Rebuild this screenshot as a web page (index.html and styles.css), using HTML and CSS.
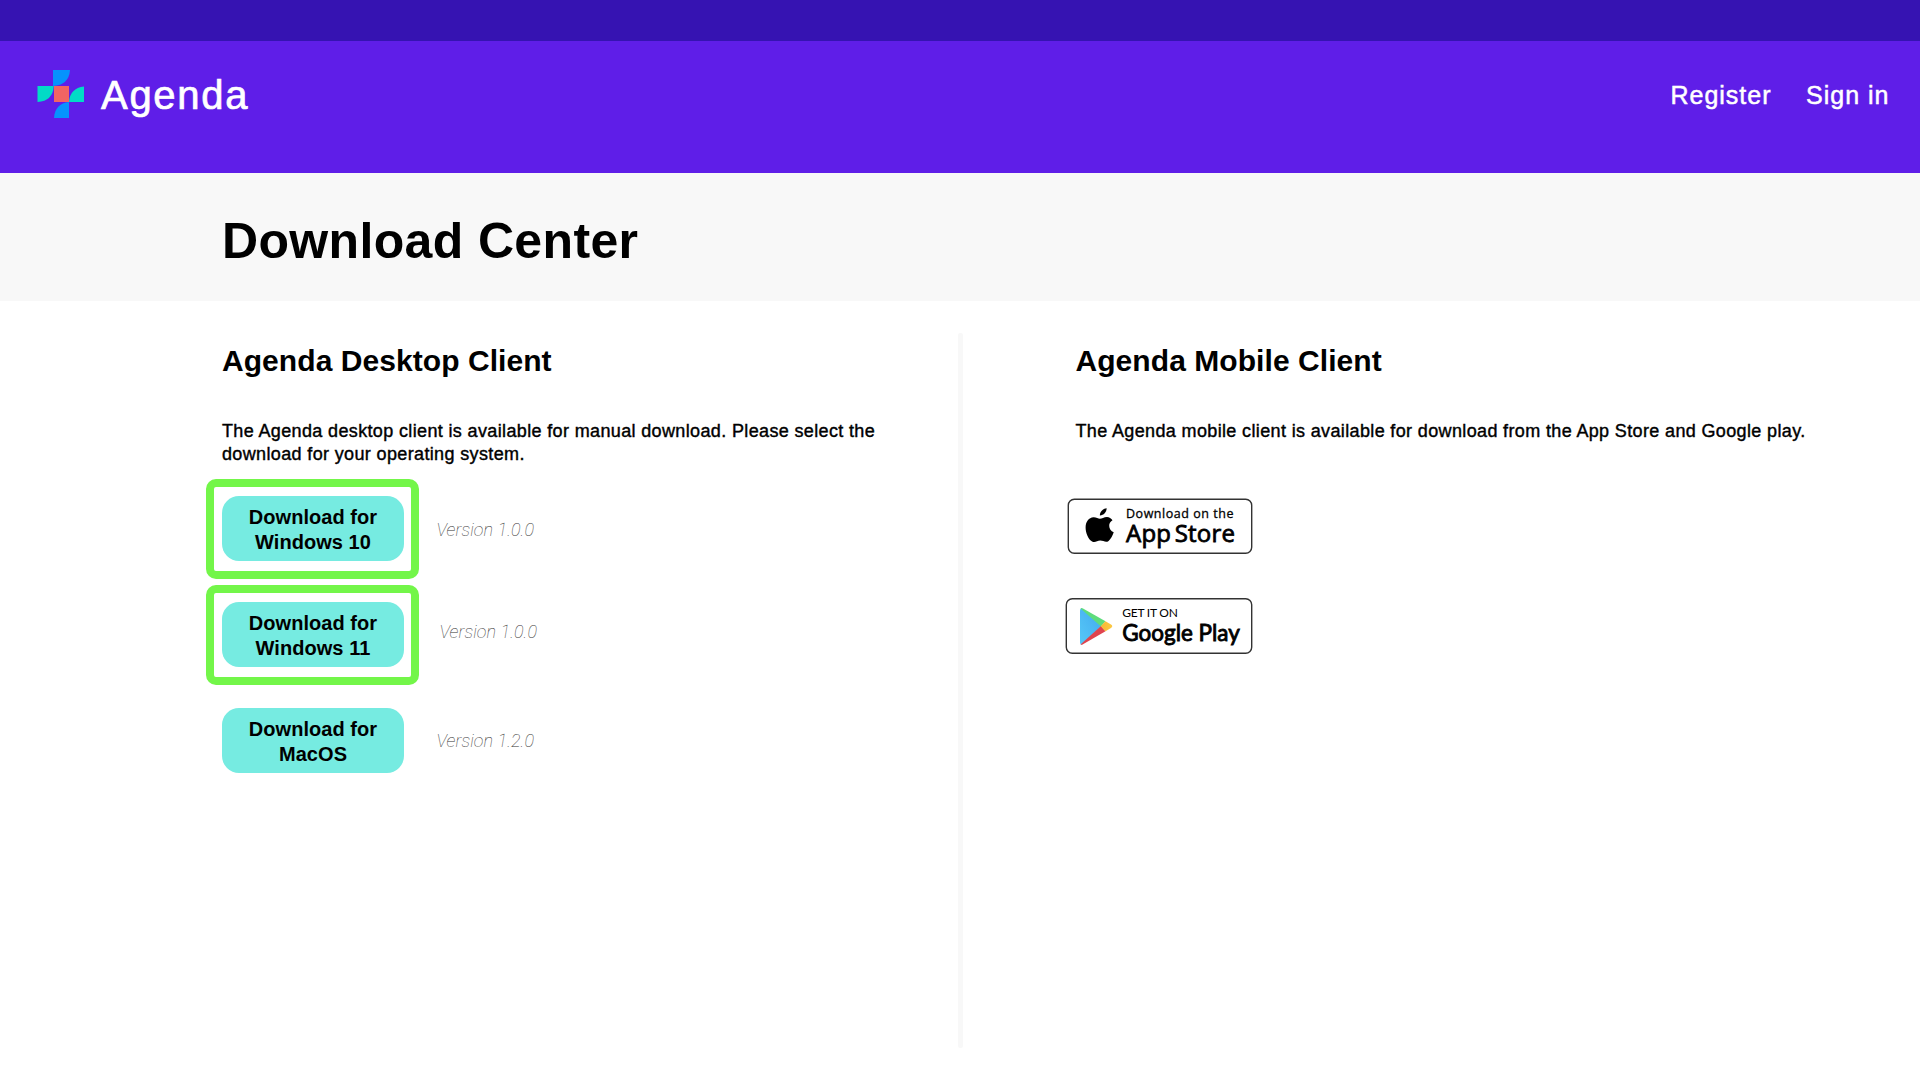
FILE: index.html
```html
<!DOCTYPE html>
<html lang="en">
<head>
<meta charset="utf-8">
<title>Agenda – Download Center</title>
<link rel="stylesheet" href="styles.css">
</head>
<body>
<div class="topbar"></div>
<header class="header">
  <a class="brand">
    <svg class="logo" viewBox="0 0 48 48" width="48" height="48">
      <path fill="#0693fd" d="M16 0H33Q32 15 16 16Z"/>
      <path fill="#02dbc6" d="M0.5 16H16.7Q16 31 0.5 32Z"/>
      <path fill="#02dbc6" d="M47 16.500V32H32Q33 18 47 16.500Z"/>
      <path fill="#0693fd" d="M32 32V48H17Q18 33.500 32 32Z"/>
      <path fill="#f16463" d="M17 16H32V32H17Z"/>
    </svg>
    <span class="brand-name">Agenda</span>
  </a>
  <nav class="nav"><a>Register</a><a>Sign in</a></nav>
</header>
<section class="title-band"><h1>Download Center</h1></section>
<main class="columns">
  <section class="desktop">
    <h2>Agenda Desktop Client</h2>
    <p>The Agenda desktop client is available for manual download. Please select the<br>download for your operating system.</p>
    <ul class="downloads">
      <li><div class="frame highlighted"><button>Download for<br>Windows 10</button></div><span class="version">Version 1.0.0</span></li>
      <li><div class="frame highlighted"><button>Download for<br>Windows 11</button></div><span class="version version-win11">Version 1.0.0</span></li>
      <li><div class="frame"><button>Download for<br>MacOS</button></div><span class="version version-mac">Version 1.2.0</span></li>
    </ul>
  </section>
  <div class="divider"></div>
  <section class="mobile">
    <h2>Agenda Mobile Client</h2>
    <p>The Agenda mobile client is available for download from the App Store and Google play.</p>
    <div class="badges">
      <svg class="badge" width="188" height="58" viewBox="0 0 188 58">
        <rect class="badge-box" x="3.300" y="2.300" width="183.400" height="54" rx="6"/>
        <g transform="translate(19.600 10.300) scale(1.25)">
          <path d="M17.600 0.800C17.800 3.700 15 6.700 12.200 6.600C12 3.700 14.700 1.100 17.600 0.800Z"/>
          <path d="M22.300 10.300C20.500 11.400 19.600 13 19.700 15C19.800 17.200 21 19 23.300 20C22.400 22.800 20.900 25.400 19.200 26.900C17 28.600 15 26.600 12.500 26.600C10 26.700 8.400 28.700 6 27.400C2.900 25.500 0.700 20.200 0.800 15.900C0.900 11.400 3.400 8.100 7.100 7.900C9.200 7.800 10.900 9.100 12.300 9.100C13.700 9.100 15.500 7.700 17.900 7.700C19.700 7.800 21.300 8.700 22.300 10.300Z"/>
        </g>
        <text class="apple-small" x="61" y="20.800" textLength="107.500">Download on the</text>
        <text class="apple-large" x="61" y="45.300" textLength="109" word-spacing="-3">App Store</text>
      </svg>
      <svg class="badge" width="188" height="58" viewBox="0 0 188 58">
        <defs>
          <linearGradient id="play-blue" x1="1" y1="0" x2="0" y2="1"><stop offset="0" stop-color="#42a9ef"/><stop offset="1" stop-color="#56c8f7"/></linearGradient>
          <linearGradient id="play-yellow"><stop offset="0" stop-color="#f7b733"/><stop offset="1" stop-color="#fcc944"/></linearGradient>
        </defs>
        <rect class="badge-box" x="1.300" y="1.700" width="185.400" height="54.600" rx="6"/>
        <path fill="url(#play-blue)" d="M15 13.500Q15 11 17 11.500L36.500 29L17 47.500Q15 48 15 45.500Z"/>
        <path fill="#5edc7c" d="M15.500 11.500Q16.200 10.700 18 11.500L40.500 24.300L36 29.500Z"/>
        <path fill="#e0444e" d="M15.500 47.500Q16.200 48.300 18 47.300L40.500 34.200L36 29Z"/>
        <path fill="url(#play-yellow)" d="M40.500 24.300L46 27.500Q48.500 29.200 46 31L40.500 34.200L35.700 29.300Z"/>
        <text class="play-small" x="57.300" y="20" textLength="55.500">GET IT ON</text>
        <text class="play-large" x="57.300" y="43.700" textLength="117.500" lengthAdjust="spacingAndGlyphs">Google Play</text>
      </svg>
    </div>
  </section>
</main>
</body>
</html>
```
FILE: styles.css
```css
* { box-sizing: border-box; }
body { margin: 0; width: 1920px; height: 1080px; overflow: hidden; background: #fff; color: #000; font-family: "Liberation Sans", Arial, sans-serif; }
h1, h2, p, ul { margin: 0; padding: 0; }
.topbar { height: 41px; background: #3613b2; }
.header { height: 132px; background: #5f1ee8; color: #fff; display: flex; justify-content: space-between; align-items: flex-start; padding: 29px 30.5px 0 37px; }
.brand { display: flex; }
.brand-name { margin-left: 16px; padding-top: 2px; font-size: 40px; line-height: 46px; letter-spacing: 1.7px; -webkit-text-stroke: 0.7px #fff; }
.nav { display: flex; gap: 34.5px; padding-top: 11px; font-size: 25px; line-height: 29px; letter-spacing: 1px; -webkit-text-stroke: 0.5px #fff; }
.title-band { height: 128px; padding: 39px 0 0 222px; background: #f8f8f8; }
h1 { font-size: 50px; line-height: 58px; letter-spacing: 0.35px; }
.columns { display: flex; padding-top: 32px; }
.desktop { width: 735.5px; margin-left: 222px; }
.divider { width: 5px; height: 715px; border-radius: 2px; background: #f8f8f8; }
.mobile { padding-left: 113px; }
h2 { padding-top: 11px; font-size: 30px; line-height: 34px; letter-spacing: 0.06px; }
p { padding-top: 42px; font-size: 18px; line-height: 23px; letter-spacing: 0.36px; white-space: nowrap; -webkit-text-stroke: 0.4px #000; }
.downloads { list-style: none; margin: 13px 0 0 -16px; display: grid; gap: 6px; }
.downloads li { display: flex; }
.frame { width: 213px; height: 100px; padding: 9px 0 0 8px; border: 8px solid transparent; border-radius: 10px; }
.frame.highlighted { border-color: #73f649; }
button { display: block; width: 182px; height: 65px; padding: 2px 0 0; border: 0; border-radius: 17px; background: #76ebe1; color: #000; font: bold 20px/25px "Liberation Sans", Arial, sans-serif; letter-spacing: 0.05px; }
.version { padding: 40px 0 0 17.5px; font: italic 100 18px/22px Roboto, sans-serif; letter-spacing: 0.08px; color: #333; }
.version-win11 { padding: 36px 0 0 20.5px; }
.version-mac { padding-top: 39px; }
.badges { display: grid; gap: 42px; margin: 54px 0 0 -10.5px; }
.badge { display: block; }
.badge-box { fill: #fff; stroke: #333; stroke-width: 1.4; }
.apple-small { font: 12.5px "Open Sans", sans-serif; stroke: #000; stroke-width: 0.3; }
.apple-large { font: 24px "Open Sans", sans-serif; stroke: #000; stroke-width: 0.8; }
.play-small { font: 12px Lato, sans-serif; }
.play-large { font: 24px Lato, sans-serif; stroke: #000; stroke-width: 0.9; }
```
